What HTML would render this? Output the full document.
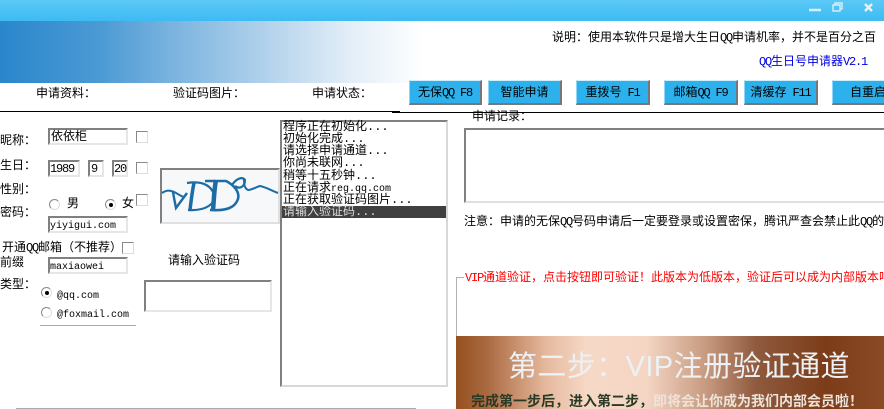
<!DOCTYPE html>
<html><head><meta charset="utf-8"><style>
html,body{margin:0;padding:0;background:#fff}
#p{position:relative;width:884px;height:409px;overflow:hidden;background:#fff;font:12px/14px "Liberation Mono","WenQuanYi Zen Hei","Noto Sans CJK SC",monospace;color:#000}
#p div,#p span.t{position:absolute}
.t{white-space:nowrap}
tt{font:12px/14px "Liberation Mono",monospace;letter-spacing:-1.2px}
tt.s{font-size:10px;letter-spacing:0}
.b{background:#2cb1ec;border-right:2px solid #777;border-bottom:2px solid #777;border-top:1px solid #cfeefc;border-left:1px solid #8fd5f5;box-sizing:border-box;height:25px;top:80px;text-align:center;line-height:24px;white-space:pre;overflow:hidden}
.i{box-sizing:border-box;border:2px solid;border-color:#808080 #e6e6e6 #e6e6e6 #808080;background:#fff}
.c{box-sizing:border-box;width:12px;height:12px;border:1px solid;border-color:#888 #ddd #ddd #888;background:#fff}
.r{box-sizing:border-box;width:11px;height:11px;border-radius:50%;border:1px solid;border-color:#888 #ddd #ddd #888;background:#fff}
.r.on:after{content:"";position:absolute;left:2.5px;top:2.5px;width:4px;height:4px;border-radius:50%;background:#000}
</style></head><body><div id="p">
<div style="left:0;top:0;width:884px;height:21px;background:linear-gradient(#5cc8f6,#3dbbf3)"></div>
<svg style="position:absolute;left:800px;top:0" width="84" height="22"><path d="M9 10h12" stroke="#d8eefa" stroke-width="2.5"/><path d="M33 5h7v6h-7zM35 5V3h7v6h-2" fill="none" stroke="#d8eefa" stroke-width="1.4"/><path d="M65 4l7 7M72 4l-7 7" stroke="#e4f3fb" stroke-width="2.4"/></svg>
<div style="left:0;top:21px;width:884px;height:62px;background:linear-gradient(90deg,#2a86cb 0,#4b9ad4 100px,#7fb6e0 180px,#b4d3ec 270px,#e3eef8 350px,#fff 425px)"></div>

<span class="t" style="left:552px;top:31px">说明：使用本软件只是增大生日<tt>QQ</tt>申请机率，并不是百分之百</span>
<span class="t" style="left:759px;top:55px;color:#0000e0"><tt>QQ</tt>生日号申请器<tt>V2.1</tt></span>

<span class="t" style="left:36px;top:87px">申请资料：</span>
<span class="t" style="left:173px;top:87px">验证码图片：</span>
<span class="t" style="left:312px;top:87px">申请状态：</span>

<div class="b" style="left:409px;width:73px">无保<tt>QQ F8</tt></div>
<div class="b" style="left:488px;width:74px">智能申请</div>
<div class="b" style="left:576px;width:74px">重拨号<tt> F1</tt></div>
<div class="b" style="left:664px;width:74px">邮箱<tt>QQ F9</tt></div>
<div class="b" style="left:744px;width:74px">清缓存<tt> F11</tt></div>
<div class="b" style="left:832px;width:70px;text-align:left;padding-left:17px">自重启</div>

<div style="left:0;top:111px;width:400px;height:1px;background:#000"></div>
<div style="left:392px;top:112px;width:492px;height:1px;background:#000"></div>

<span class="t" style="left:0;top:134px">昵称：</span>
<div class="i" style="left:48px;top:128px;width:80px;height:17px"></div>
<span class="t" style="left:51px;top:130px">依依柜</span>
<div class="c" style="left:136px;top:131px"></div>

<span class="t" style="left:0;top:159px">生日：</span>
<div class="i" style="left:48px;top:160px;width:32px;height:17px"></div>
<span class="t" style="left:50px;top:162px"><tt>1989</tt></span>
<div class="i" style="left:88px;top:160px;width:16px;height:17px"></div>
<span class="t" style="left:91px;top:162px"><tt>9</tt></span>
<div class="i" style="left:112px;top:160px;width:16px;height:17px"></div>
<span class="t" style="left:114px;top:162px"><tt>20</tt></span>
<div class="c" style="left:136px;top:162px"></div>

<span class="t" style="left:0;top:183px">性别：</span>
<span class="t" style="left:0;top:206px">密码：</span>
<div class="r" style="left:49px;top:199px"></div>
<span class="t" style="left:67px;top:197px">男</span>
<div class="r on" style="left:105px;top:199px"></div>
<span class="t" style="left:122px;top:197px">女</span>
<div class="c" style="left:136px;top:194px"></div>
<div class="i" style="left:48px;top:216px;width:80px;height:17px"></div>
<span class="t" style="left:50px;top:218px"><tt class="s">yiyigui.com</tt></span>

<span class="t" style="left:2px;top:241px">开通<tt>QQ</tt>邮箱（不推荐）</span>
<div class="c" style="left:122px;top:242px"></div>

<span class="t" style="left:0;top:256px">前缀</span>
<div class="i" style="left:48px;top:257px;width:80px;height:17px"></div>
<span class="t" style="left:50px;top:259px"><tt class="s">maxiaowei</tt></span>

<span class="t" style="left:0;top:278px">类型：</span>
<div class="r on" style="left:41px;top:287px"></div>
<span class="t" style="left:57px;top:288px"><tt class="s">@qq.com</tt></span>
<div class="r" style="left:41px;top:307px"></div>
<span class="t" style="left:57px;top:307px"><tt class="s">@foxmail.com</tt></span>
<div style="left:40px;top:325px;width:96px;height:1px;background:#aaa"></div>

<div class="i" style="left:160px;top:168px;width:120px;height:56px;background:#f7f8fa;border-color:#808080 #e0e0e0 #e0e0e0 #808080"></div>
<svg style="position:absolute;left:160px;top:168px" width="120" height="56" fill="none" stroke="#1c6ca5"><path d="M2 25C5 23 8 22 11 23 16 24 20 28 24 29" stroke-width="2"/><path d="M13 24C14 30 15 35 16 40L27 25" stroke-width="2.4"/><path d="M27 15C40 13 50 16 54 26 56 36 46 43 28 42" stroke-width="2.2"/><path d="M34 15C32 24 31 34 30 42" stroke-width="3.5"/><path d="M45 13H66C74 17 80 24 78 31 75 40 66 43 50 42" stroke-width="2.6"/><path d="M56 12C54 22 54 32 53 42" stroke-width="4.5"/><path d="M72 17C76 11 82 8 85 12 85 18 80 22 75 18" stroke-width="2.2"/><path d="M84 10C84 16 84 20 88 22 92 22 96 19 100 18 106 19 112 23 118 25" stroke-width="2"/></svg>

<span class="t" style="left:168px;top:254px">请输入验证码</span>
<div class="i" style="left:144px;top:280px;width:128px;height:32px"></div>
<div style="left:16px;top:408px;width:400px;height:1px;background:#aaa"></div>

<div class="i" style="left:280px;top:120px;width:168px;height:267px;border-color:#808080 #d8d8d8 #d8d8d8 #808080"></div>
<div style="left:282px;top:206px;width:164px;height:12px;background:#404040"></div>
<span class="t" style="left:283px;top:120px">程序正在初始化...</span>
<span class="t" style="left:283px;top:132px">初始化完成...</span>
<span class="t" style="left:283px;top:144px">请选择申请通道...</span>
<span class="t" style="left:283px;top:156px">你尚未联网...</span>
<span class="t" style="left:283px;top:169px">稍等十五秒钟...</span>
<span class="t" style="left:283px;top:181px">正在请求<tt class="s">reg.qq.com</tt></span>
<span class="t" style="left:283px;top:193px">正在获取验证码图片...</span>
<span class="t" style="left:283px;top:205px;color:#ddd">请输入验证码...</span>

<span class="t" style="left:472px;top:110px">申请记录：</span>
<div class="i" style="left:464px;top:128px;width:430px;height:75px;border-color:#808080 #e0e0e0 #e0e0e0 #808080"></div>
<span class="t" style="left:464px;top:215px">注意：申请的无保<tt>QQ</tt>号码申请后一定要登录或设置密保，腾讯严查会禁止此<tt>QQ</tt>的</span>

<div style="left:456px;top:277px;width:1px;height:60px;background:#b0b0b0"></div>
<div style="left:456px;top:277px;width:8px;height:1px;background:#b0b0b0"></div>
<span class="t" style="left:465px;top:271px;color:#f00"><tt>VIP</tt>通道验证，点击按钮即可验证！此版本为低版本，验证后可以成为内部版本吧</span>

<div style="left:456px;top:336px;width:428px;height:73px;background:linear-gradient(90deg,#95501f 0,#a9683f 30px,#e5b99d 90px,#f6d8c6 130px,#f5d6c4 190px,#c79a80 250px,#8f5a3e 300px,#7c3c18 370px,#8a4a26 428px)"></div>
<span class="t" style="left:508px;top:349px;font:29px/36px 'Liberation Sans','Noto Sans CJK SC',sans-serif;color:#edf1f4;letter-spacing:.4px">第二步：VIP注册验证通道</span>
<span class="t" style="left:471px;top:393px;font:bold 14px/16px 'Liberation Sans','Noto Sans CJK SC',sans-serif;color:#2a3a26">完成第一步后，进入第二步，<span style="color:#eee3da">即将会让你成为我们内部会员啦！</span></span>
</div></body></html>
